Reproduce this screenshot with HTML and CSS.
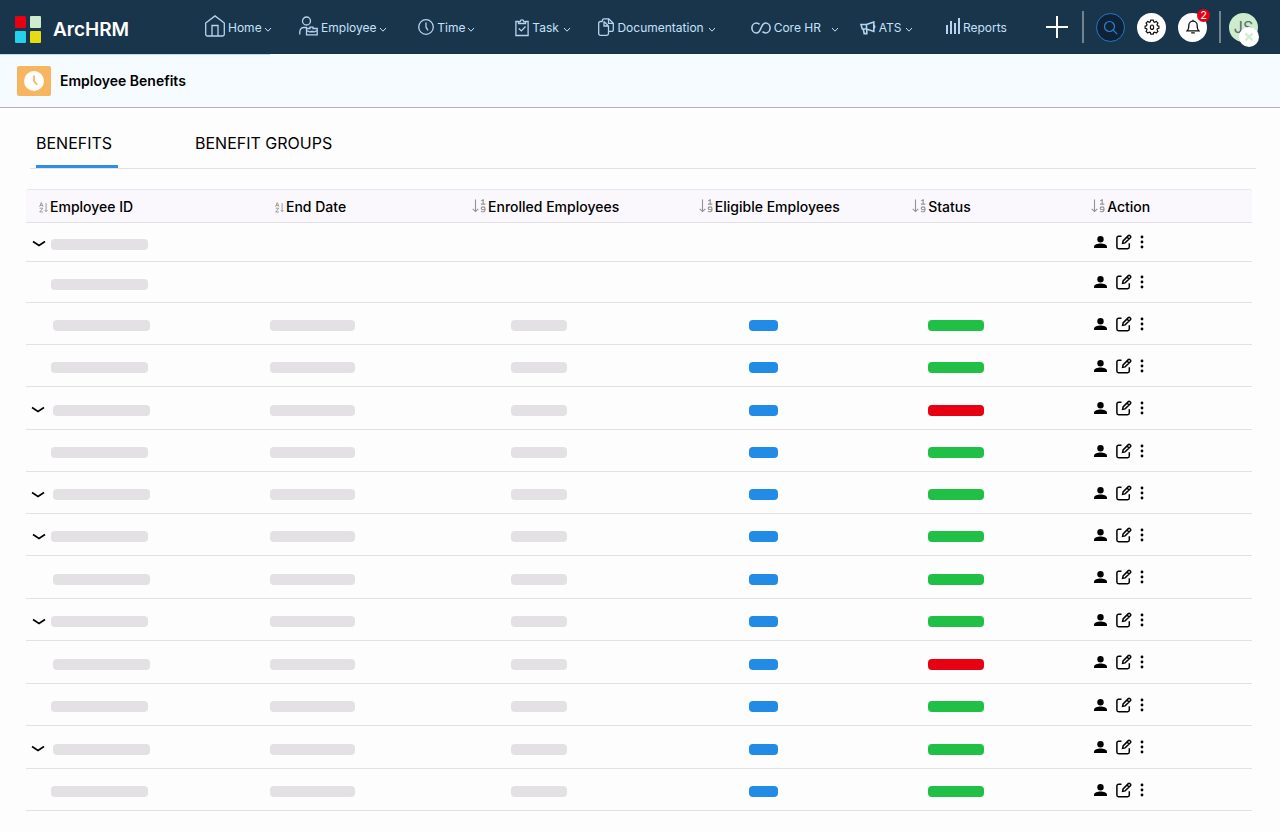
FILE: index.html
```html
<!DOCTYPE html>
<html lang="en">
<head>
  <meta charset="UTF-8" />
  <meta name="viewport" content="width=device-width, initial-scale=1.0"/>
  <title>ArcHRM - Employee Benefits</title>
  <link rel="stylesheet" href="styles.css">
</head>
<body>
  <svg class="sprite" aria-hidden="true">
    <symbol id="caret" viewBox="0 0 8 6"><path d="M1 1l3 3.200 3-3.200" fill="none" stroke="currentColor" stroke-width="1"/></symbol>
    <symbol id="chevron" viewBox="0 0 14 8"><path d="M1 1.500l6 4 6-4" fill="none" stroke="currentColor" stroke-width="1.600"/></symbol>
    <symbol id="person" viewBox="0 0 14 14"><circle cx="6.500" cy="4.200" r="3.200"/><path d="M0 13v-1.200c0-2 3.600-3.200 6.500-3.200s6.500 1.200 6.500 3.200V13z"/></symbol>
    <symbol id="edit" viewBox="0 0 16 16"><path d="M5.500 2.300H2.600A1.700 1.700 0 0 0 .9 4v9a1.700 1.700 0 0 0 1.700 1.700h9a1.700 1.700 0 0 0 1.700-1.700V9.300M6.600 9.300l.5-2.400 5.200-5.300a1.100 1.100 0 0 1 1.600 0l.5.500a1.100 1.100 0 0 1 0 1.600L9.100 8.900zM11 3l2 2" fill="none" stroke="currentColor" stroke-width="1.500"/></symbol>
    <symbol id="dots" viewBox="0 0 4 14"><circle cx="2" cy="2" r="1.400"/><circle cx="2" cy="7" r="1.400"/><circle cx="2" cy="12" r="1.400"/></symbol>
    <symbol id="sort-az" viewBox="0 0 9 11"><path d="M.6 4.600L2.300.6 4 4.600M1.100 3.400h2.400M.7 6.200h3.100L.7 10h3.300M7.100 1v8.500M5.700 8.100l1.400 1.500 1.400-1.500" fill="none" stroke="currentColor" stroke-width=".9"/></symbol>
    <symbol id="sort-19" viewBox="0 0 14 14"><path d="M3.500.5v12M.7 9.900l2.800 2.700 2.800-2.700M9.300 1.700L11.200.8v4.200M9 5.100h4.300M13 9.300c0 1-.8 1.400-1.900 1.400S9.200 10.300 9.200 9.300 10 7.900 11.100 7.900 13 8.300 13 9.300v1.800c0 1.200-.8 1.700-1.900 1.700-.9 0-1.600-.3-1.900-.9" fill="none" stroke="currentColor" stroke-width="1.100"/></symbol>
  </svg>

  <header class="topbar">
    <a class="brand" href="#">
      <span class="logo"><i class="red"></i><i class="mint"></i><i class="cyan"></i><i class="yellow"></i></span>
      ArcHRM
    </a>

    <nav class="menu">
      <a href="#">
        <svg class="home" width="20" height="22" viewBox="0 0 20 22"><path d="M.7 8L10 .9 19.300 8v11.300a1.700 1.700 0 0 1-1.700 1.700H2.400A1.700 1.700 0 0 1 .7 19.300zM7 21V10.500h6V21" /></svg>
        Home<svg class="caret" width="8" height="6"><use href="#caret"/></svg>
      </a>
      <a href="#">
        <svg class="raised" width="19" height="20" viewBox="0 0 19 20"><circle cx="7.500" cy="5" r="4"/><path d="M.8 18.500v-2.500c0-2.700 1.600-4.500 4.200-4.500h3M7.500 12.500h3.500v-1.300h3v1.300h4.200v6.300H7.500zM7.500 14.500l3 1.300h5l2.700-1.300M11.500 15.500h3"/></svg>
        Employee<svg class="caret" width="8" height="6"><use href="#caret"/></svg>
      </a>
      <a href="#">
        <svg class="clock" width="16" height="18" viewBox="0 0 16 18"><circle cx="8" cy="9" r="7.300"/><path d="M8 4.500v4.700l2 3.200"/></svg>
        Time<svg class="caret" width="8" height="6"><use href="#caret"/></svg>
      </a>
      <a href="#">
        <svg width="14" height="18" viewBox="0 0 14 18"><path d="M3.500 2.500H.9v14h12.200v-14h-2.600M3.500 4.500V2.600h1.700a1.800 1.800 0 0 1 3.600 0h1.700v1.900zM3.800 9.500l2.500 2.400L10.500 7.500"/></svg>
        Task<svg class="caret near" width="8" height="6"><use href="#caret"/></svg>
      </a>
      <a href="#">
        <svg class="files" width="16" height="18" viewBox="0 0 16 18"><path d="M4.500 3.500H2.400A1.700 1.700 0 0 0 .7 5.200v10.400a1.700 1.700 0 0 0 1.700 1.700h6.400a1.700 1.700 0 0 0 1.700-1.700v-2M4.500 3.500V2.300A1.500 1.500 0 0 1 6 .8h4.800l4.500 4.500v6.600a1.500 1.500 0 0 1-1.500 1.500h-3.300M10.500.8v4.500h4.800M6 3.500v4.500h4.500M6 3.500l4.500 4.500v5.500"/></svg>
        Documentation<svg class="caret near" width="8" height="6"><use href="#caret"/></svg>
      </a>
      <a href="#">
        <svg class="thick" width="20" height="12" viewBox="0 0 20 12"><path d="M8.500 2.300C7.600 1.500 6.700 1 5.500 1a4.600 5 0 0 0 0 10c2.300 0 3.300-2 4.500-5s2.200-5 4.500-5a4.600 5 0 0 1 0 10c-1.200 0-2.100-.5-3-1.300"/></svg>
        Core HR<svg class="caret far" width="8" height="6"><use href="#caret"/></svg>
      </a>
      <a href="#">
        <svg class="thick" width="16" height="14" viewBox="0 0 16 14"><path d="M1 3.500h5.500L13.800 1v9.500L6.500 8H2.300zM6.500 3.500V8M3.300 8l.9 4.600h2.600V8M13.800 4.300c1.200.2 1.200 2.500 0 2.700"/></svg>
        ATS<svg class="caret near" width="8" height="6"><use href="#caret"/></svg>
      </a>
      <a href="#">
        <svg class="bars" width="15" height="18" viewBox="0 0 15 18"><path d="M2 8v9M6 4v13M10 6v11M14 1v16"/></svg>
        Reports
      </a>
    </nav>

    <div class="tools">
      <button class="add" aria-label="Add"><svg width="22" height="22" viewBox="0 0 22 22"><path d="M11 0v22M0 11h22" stroke="currentColor" stroke-width="2"/></svg></button>
      <span class="divider"></span>
      <button class="round search" aria-label="Search"><svg width="15" height="15" viewBox="0 0 15 15" fill="none" stroke="currentColor" stroke-width="1.200"><circle cx="6.500" cy="6.500" r="5"/><path d="M10.200 10.200l4 4"/></svg></button>
      <button class="round" aria-label="Settings"><svg width="16" height="16" viewBox="0 0 16 16" fill="none" stroke="currentColor" stroke-width="1.200"><path d="M6.700 1.200h2.600l.4 1.700 1 .4 1.600-.9 1.600 1.700-.9 1.500.4 1.100 1.500.400v2.200l-1.500.4-.4 1.100.9 1.500-1.600 1.700-1.600-.9-1 .4-.4 1.600H6.700l-.4-1.600-1-.4-1.600.9-1.600-1.700.9-1.500-.4-1.100L1.100 9.300V7.100l1.500-.4.4-1.100-.9-1.500 1.600-1.700 1.600.9 1-.4z"/><ellipse cx="8" cy="8.200" rx="1.600" ry="2.200"/></svg></button>
      <button class="round bell" aria-label="Notifications"><svg width="14" height="16" viewBox="0 0 14 16" fill="none" stroke="currentColor" stroke-width="1.300"><path d="M1.200 11.800h11.600C11 10.200 11.200 8.500 11.200 6.500a4.200 4.300 0 0 0-8.400 0c0 2 .2 3.700-1.600 5.300zM7 2.200V.8M5.200 13.800h3.600"/></svg><span class="badge">2</span></button>
      <span class="divider"></span>
      <button class="avatar" aria-label="Account">JS<span class="state"><svg width="10" height="10" viewBox="0 0 10 10"><path d="M1.500 1.500l7 7M8.500 1.500l-7 7" stroke="currentColor" stroke-width="2"/></svg></span></button>
    </div>
  </header>

  <div class="subheader">
    <span class="page-icon"><svg width="20" height="20" viewBox="0 0 20 20"><circle cx="10" cy="10" r="10" fill="#fff"/><path d="M10 4.500V10l3 3.800" fill="none" stroke="#f7b55f" stroke-width="1.800"/></svg></span>
    <h1>Employee Benefits</h1>
  </div>

  <main>
    <div class="tabs">
      <button class="tab active">BENEFITS</button>
      <button class="tab">BENEFIT GROUPS</button>
    </div>

    <table class="benefits">
      <thead>
        <tr>
          <th class="id"><svg width="9" height="11"><use href="#sort-az"/></svg>Employee ID</th>
          <th class="end"><svg width="9" height="11"><use href="#sort-az"/></svg>End Date</th>
          <th class="enrolled"><svg width="14" height="14"><use href="#sort-19"/></svg>Enrolled Employees</th>
          <th class="eligible"><svg width="14" height="14"><use href="#sort-19"/></svg>Eligible Employees</th>
          <th class="status"><svg width="14" height="14"><use href="#sort-19"/></svg>Status</th>
          <th class="action"><svg width="14" height="14"><use href="#sort-19"/></svg>Action</th>
        </tr>
      </thead>
      <tbody id="rows"></tbody>
    </table>
  </main>

  <script>
    // open: has an expand arrow, inset: id bar sits slightly to the right
    const rows = [
      { open: true, status: '' },
      { status: '' },
      { inset: true, status: 'green' },
      { status: 'green' },
      { open: true, inset: true, status: 'red' },
      { status: 'green' },
      { open: true, inset: true, status: 'green' },
      { open: true, status: 'green' },
      { inset: true, status: 'green' },
      { open: true, status: 'green' },
      { inset: true, status: 'red' },
      { status: 'green' },
      { open: true, inset: true, status: 'green' },
      { status: 'green' }
    ];

    function bar(type, show) {
      return show ? `<span class="bar ${type}"></span>` : '';
    }

    document.getElementById('rows').innerHTML = rows.map(row => `
      <tr>
        <td class="id"><div class="id-cell${row.inset ? ' inset' : ''}">
          ${row.open ? '<button class="expand" aria-label="Expand"><svg width="14" height="8"><use href="#chevron"/></svg></button>' : ''}
          <span class="bar long"></span>
        </div></td>
        <td class="end">${bar('date', row.status)}</td>
        <td class="enrolled">${bar('count', row.status)}</td>
        <td class="eligible">${bar('blue', row.status)}</td>
        <td class="status">${bar(row.status, row.status)}</td>
        <td class="action"><div class="actions">
          <button aria-label="View employee"><svg width="14" height="14"><use href="#person"/></svg></button>
          <button aria-label="Edit"><svg width="16" height="16"><use href="#edit"/></svg></button>
          <button aria-label="More"><svg width="4" height="14"><use href="#dots"/></svg></button>
        </div></td>
      </tr>`).join('');
  </script>
</body>
</html>
```
FILE: styles.css
```css
* {
  box-sizing: border-box;
}
body {
  margin: 0;
  font-family: Inter, sans-serif;
  background: #fdfdfd;
  color: #000;
}
button {
  padding: 0;
  border: none;
  background: none;
  color: inherit;
  font-family: inherit;
  cursor: pointer;
}
svg {
  display: block;
  flex-shrink: 0;
}
.sprite {
  position: absolute;
  width: 0;
  height: 0;
}

/* top bar */
.topbar {
  display: flex;
  align-items: center;
  height: 54px;
  padding: 0 22px 0 15px;
  background: #19354c;
}
.brand {
  display: flex;
  align-items: center;
  gap: 12px;
  width: 190px;
  padding-top: 5px;
  color: #fff;
  font-size: 19px;
  font-weight: 600;
  text-decoration: none;
}
.logo {
  display: grid;
  grid-template-columns: 11px 11px;
  gap: 3px 4px;
}
.logo i {
  height: 12px;
  border-radius: 1px;
}
.logo .red { background: #e60012; }
.logo .mint { background: #cdeccd; }
.logo .cyan { background: #25d0ea; }
.logo .yellow { background: #e6dc14; }
.menu {
  flex: 1;
  display: grid;
  grid-template-columns: 94fr 119fr 97fr 83fr 152fr 109fr 85fr 101fr;
}
.menu a {
  display: flex;
  align-items: center;
  gap: 2px;
  color: #c5e1fa;
  font-size: 12px;
  line-height: 20px;
  padding-top: 2px;
  text-decoration: none;
  white-space: nowrap;
}
.menu svg {
  margin-right: 1px;
  fill: none;
  stroke: #b4d4f0;
  stroke-width: 1.3;
}
.menu .home,
.menu .raised,
.menu .bars {
  margin-top: -4px;
}
.menu .clock,
.menu .files {
  margin-top: -2px;
}
.menu .thick {
  stroke-width: 1.6;
}
.menu .bars {
  stroke-width: 2;
}
.menu .caret {
  margin-top: 3px;
}
.menu .near {
  margin-left: 2px;
}
.menu .far {
  margin-left: 8px;
}
.tools {
  display: flex;
  align-items: center;
  gap: 12px;
}
.add {
  color: #fff;
  margin-right: 2px;
}
.divider {
  width: 2px;
  height: 32px;
  background: #72828f;
}
.round {
  position: relative;
  display: flex;
  align-items: center;
  justify-content: center;
  width: 29px;
  height: 29px;
  border-radius: 50%;
  background: #fff;
  color: #111;
}
.search {
  background: #0e2337;
  border: 1px solid #2a78c8;
  color: #2f80d0;
}
.badge {
  position: absolute;
  top: -4px;
  right: -3px;
  width: 13px;
  height: 13px;
  border-radius: 50%;
  background: #e60012;
  color: #fff;
  font-size: 11px;
  line-height: 13px;
  text-align: center;
}
.avatar {
  position: relative;
  width: 29px;
  height: 29px;
  margin-left: -4px;
  border-radius: 50%;
  background: #cdeccd;
  color: #5b6b66;
  font-size: 16px;
}
.state {
  position: absolute;
  right: -1px;
  bottom: -5px;
  display: flex;
  align-items: center;
  justify-content: center;
  width: 20px;
  height: 20px;
  border-radius: 50%;
  background: #fff;
  color: #cdeccd;
}

/* page title */
.subheader {
  display: flex;
  align-items: center;
  gap: 9px;
  height: 54px;
  padding-left: 17px;
  background: linear-gradient(#b9dcf8, #b9dcf8) 0 0 / 270px 1px no-repeat #f6fbff;
  border-bottom: 1px solid #bfaab6;
}
.page-icon {
  display: flex;
  align-items: center;
  justify-content: center;
  width: 34px;
  height: 30px;
  border-radius: 2px;
  background: #f7b55f;
}
h1 {
  margin: 0;
  font-size: 14px;
  font-weight: 600;
}

main {
  padding: 16px 24px 20px 26px;
}
.tabs {
  display: flex;
  gap: 77px;
  margin-left: 4px;
  padding-left: 6px;
  border-bottom: 1px solid #e2e2e4;
}
.tab {
  height: 44px;
  padding-bottom: 4px;
  border-bottom: 3px solid transparent;
  font-size: 16px;
}
.active {
  min-width: 82px;
  text-align: left;
  border-bottom-color: #2f8fe6;
}

/* benefits table */
.benefits {
  width: calc(100% - 4px);
  margin-top: 20px;
  table-layout: fixed;
  border-spacing: 0;
}
th, td {
  padding: 0;
  border-bottom: 1px solid #e2e2e4;
}
th {
  height: 34px;
  border-top: 1px solid #e8e6ea;
  background: #faf8fc;
  font-size: 14px;
  font-weight: 500;
  text-align: left;
  white-space: nowrap;
}
th:first-child {
  border-top-left-radius: 3px;
}
th:last-child {
  border-top-right-radius: 3px;
}
th svg {
  display: inline-block;
  margin-right: 2px;
  color: #929292;
  vertical-align: -1px;
}
th.id { width: 19.9%; padding-left: 13px; }
th.end { width: 16.4%; padding-left: 5px; }
th.enrolled { width: 18.5%; padding-left: 1px; }
th.eligible { width: 17.4%; padding-left: 1px; }
th.status { width: 14.6%; padding-left: 1px; }
th.action { padding-left: 1px; }

td {
  height: 42px;
  padding-top: 4px;
}
tr:nth-child(1) td {
  height: 39px;
}
tr:nth-child(2) td {
  height: 41px;
}
tr:nth-child(5) td,
tr:nth-child(9) td,
tr:nth-child(11) td,
tr:nth-child(13) td {
  height: 43px;
}
td.enrolled { padding-left: 40px; }
td.eligible { padding-left: 51px; }
td.status { padding-left: 17px; }
td.action { padding: 0 0 0 4px; }
.id-cell {
  display: flex;
  align-items: center;
  justify-content: flex-end;
  gap: 5px;
  width: 122px;
}
.inset {
  width: 124px;
  gap: 8px;
}
.bar {
  display: block;
  height: 11px;
  border-radius: 4px;
  background: #e3e1e4;
}
.long { width: 97px; }
.date { width: 85px; }
.count { width: 56px; }
.blue { width: 29px; background: #228be6; }
.green { width: 56px; background: #20bf46; }
.bar.red { width: 56px; background: #e60012; }
.actions {
  display: flex;
  align-items: center;
  gap: 8px;
}
```
